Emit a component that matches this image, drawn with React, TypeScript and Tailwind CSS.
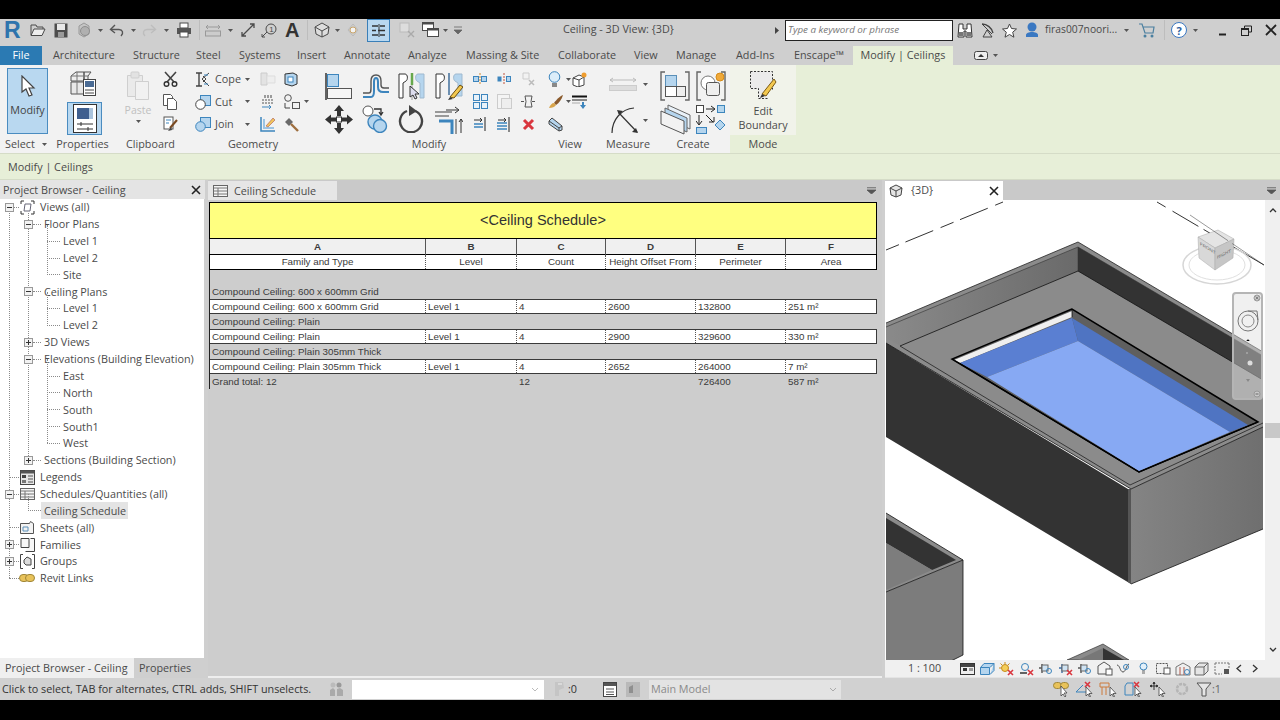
import type { ReactNode } from "react";

const S = ({ w, h, children }: { w: number; h: number; children?: ReactNode }) => (
  <svg width={w} height={h} viewBox={`0 0 ${w} ${h}`} fill="none" className="block shrink-0">
    {children}
  </svg>
);

const Dd = () => (
  <S w={5} h={3}>
    <path d="M0 0h5L2.5 3z" fill="#555" />
  </S>
);

const BLUE = "#3d85bd";
const PALE = "#b5d5ee";
const INK = "#4a4a4a";

// quick access toolbar
const QFolder = () => (
  <S w={16} h={14}>
    <path d="M1 12V2h5l1 2h6v2" stroke={INK} />
    <path d="M1 12.5 4 6h11l-3 6.5z" fill="#eee" stroke={INK} />
  </S>
);
const QSave = () => (
  <S w={14} h={15}>
    <rect x="0.5" y="0.5" width="13" height="14" fill="#4d4d4d" />
    <rect x="3" y="1" width="8" height="6" fill="#e8e8e8" />
    <rect x="4" y="9" width="6" height="5" fill="#9a9a9a" />
  </S>
);
const QSync = () => (
  <S w={16} h={16}>
    <path d="M3 4 8 1l5 3v8l-5 3-5-3z" fill="#c4c4c4" stroke="#999" />
    <circle cx="9" cy="9" r="4.5" fill="#b0b0b0" stroke="#8f8f8f" />
  </S>
);
const QUndo = ({ off }: { off?: boolean }) => (
  <S w={16} h={15}>
    <g transform={off ? "matrix(-1 0 0 1 16 0)" : undefined} stroke={off ? "#bdbdbd" : "#555"} strokeWidth="1.4">
      <path d="M6 2 1.5 6.5 6 10" />
      <path d="M2 6.5h8c3.5 0 5 3.5 2 6.5" />
    </g>
  </S>
);
const QPrint = () => (
  <S w={16} h={16}>
    <rect x="4" y="1" width="8" height="5" fill="#fff" stroke={INK} />
    <rect x="1" y="6" width="14" height="6" fill="#555" />
    <rect x="4" y="10" width="8" height="5" fill="#fff" stroke={INK} />
  </S>
);
const QMeasure = () => (
  <S w={16} h={14}>
    <path d="M1 4h14M3 2 1 4l2 2M13 2l2 2-2 2" stroke="#999" />
    <rect x="0.5" y="8" width="15" height="5" fill="#ccc" stroke="#999" />
  </S>
);
const QDiag = () => (
  <S w={16} h={16}>
    <path d="M2 14 14 2M10 2h4v4M2 10v4h4" stroke={INK} strokeWidth="1.3" />
  </S>
);
const QTag = () => (
  <S w={16} h={15}>
    <circle cx="10" cy="6" r="5" stroke={INK} />
    <text x="8.3" y="9" fontSize="8" fill={INK} fontFamily="Liberation Sans">1</text>
    <path d="M1 14 6 9M1 11v3h3" stroke={INK} />
  </S>
);
const QHome = () => (
  <S w={16} h={16}>
    <path d="M8 1 1 5l1 7 6 3 6-3 1-7z" fill="#ddd" stroke={INK} />
    <path d="M1 5l7 4 7-4M8 9v6" stroke={INK} />
  </S>
);
const QRing = () => (
  <S w={12} h={14}>
    <path d="M6 1 11 7 6 13 1 7z" stroke="#bbb" />
    <circle cx="6" cy="7" r="3" fill="#f3f3f3" stroke="#c9a56a" />
  </S>
);
const QThin = () => (
  <div className="w-[23px] h-[23px] bg-[#b9d8f0] border border-[#3a7fb8] flex items-center justify-center">
    <S w={15} h={15}>
      <path d="M1 3h6M9 3h5M1 7.500h4M7 7.500h7M1 12h6M9 12h5" stroke="#333" strokeWidth="1.6" />
      <path d="M8 1v13" stroke="#333" />
    </S>
  </div>
);
const QWin1 = () => (
  <S w={16} h={16}>
    <rect x="1" y="1" width="9" height="9" fill="#ddd" stroke="#bbb" />
    <path d="M9 9l6 6M15 9l-6 6" stroke="#aaa" strokeWidth="1.4" />
  </S>
);
const QWin2 = () => (
  <S w={17} h={16}>
    <rect x="0.500" y="0.500" width="11" height="8" fill="#fff" stroke={INK} />
    <rect x="0.500" y="0.500" width="11" height="2" fill={INK} />
    <rect x="5.500" y="6.500" width="11" height="8" fill="#fff" stroke={INK} />
    <rect x="5.500" y="6.500" width="11" height="2" fill={INK} />
  </S>
);
const QCustom = () => (
  <S w={8} h={9}>
    <path d="M0 1h8M0 4h8L4 8z" fill="#666" stroke="#666" strokeWidth="0.8" />
  </S>
);

// ribbon: select / properties / clipboard
const Cursor = ({ size = 22 }: { size?: number }) => (
  <svg width={size} height={size} viewBox="0 0 22 22" className="block shrink-0">
    <path d="M5 1v16l4-3 3 7 3-1-3-7h5z" fill="#fff" stroke="#444" strokeWidth="1.2" />
  </svg>
);
const BigProps = () => (
  <S w={28} h={27}>
    <path d="M1 6 6 2h8v9H1zM14 2h7l-3 4v6h-4z" fill="#eee" stroke="#555" />
    <path d="M1 12h13v12H1z" fill="#e8e8e8" stroke="#555" />
    <path d="M7 2v22M1 6h17" stroke="#777" />
    <rect x="13.500" y="9.500" width="12" height="16" fill="#fff" stroke="#444" />
    <rect x="15" y="11" width="9" height="6" fill="#4a6b94" />
    <path d="M15 20h9M15 23h9" stroke="#444" />
  </S>
);
const BigPropsActive = () => (
  <S w={24} h={29}>
    <rect x="0.500" y="0.500" width="23" height="28" fill="#fff" stroke="#333" />
    <rect x="4" y="4" width="12" height="11" fill="#3f5f8f" />
    <rect x="16" y="4" width="4" height="11" fill="#a9c3dd" />
    <path d="M4 20h16M4 25h16M8 18v4M15 23v4" stroke="#333" />
  </S>
);
const Paste = () => (
  <S w={24} h={30}>
    <path d="M1.500 4.500h15v21h-15z" fill="#eaeaea" stroke="#cfcfcf" />
    <rect x="5" y="1" width="8" height="6" rx="1" fill="#e2e2e2" stroke="#cfcfcf" />
    <path d="M9.500 10.500h13v18h-13z" fill="#f1f1f1" stroke="#cfcfcf" />
  </S>
);
const Scissors = () => (
  <S w={15} h={16}>
    <path d="M2 1l9 10M13 1 4 11" stroke="#444" strokeWidth="1.6" />
    <circle cx="3.500" cy="13" r="2.300" stroke="#333" strokeWidth="1.4" />
    <circle cx="11.500" cy="13" r="2.300" stroke="#333" strokeWidth="1.4" />
  </S>
);
const Copy = () => (
  <S w={14} h={16}>
    <path d="M.5.500h7l2 2v9H.5z" fill="#fff" stroke="#555" />
    <path d="M4.500 4.500h6l3 3v8h-9z" fill="#fff" stroke="#555" />
  </S>
);
const Match = () => (
  <S w={16} h={16}>
    <rect x="1" y="1" width="9" height="12" fill="#fff" stroke="#555" />
    <path d="M3 4h5M3 7h3" stroke="#3d85bd" />
    <path d="M14 4 7 12" stroke="#7a4a22" strokeWidth="2" />
    <path d="M8 11 5 15l4-1z" fill="#444" />
  </S>
);

// geometry
const Cope = () => (
  <S w={16} h={15}>
    <path d="M1 1h6M1 14h6M4 1v13" stroke="#444" strokeWidth="1.4" />
    <path d="M7 7 14 1M7 7l7 7M8 4l3 3-3 3" stroke="#444" />
    <path d="M9 3h4M9 12h4" stroke="#3d85bd" />
  </S>
);
const Cut = () => (
  <S w={16} h={16}>
    <rect x="5.500" y="1.500" width="10" height="10" fill={PALE} stroke={BLUE} />
    <circle cx="5.500" cy="10.500" r="4.800" fill="#fff" stroke="#444" />
  </S>
);
const Join = () => (
  <S w={16} h={16}>
    <rect x="5.500" y="1.500" width="10" height="10" fill={PALE} stroke={BLUE} />
    <circle cx="5.500" cy="10.500" r="4.800" fill={PALE} stroke={BLUE} />
  </S>
);
const WallOff = () => (
  <S w={16} h={14}>
    <path d="M1 1h6v12H1z" fill="#e3e3e3" stroke="#ccc" />
    <path d="M7 4h8v7H7z" fill="#eee" stroke="#ddd" />
  </S>
);
const ShieldBlue = () => (
  <S w={14} h={15}>
    <path d="M1 2 9 1l4 2v9l-5 2-7-2z" fill={PALE} stroke="#333" />
    <rect x="4" y="5" width="5" height="5" fill="#fff" stroke={BLUE} />
  </S>
);
const Split = () => (
  <S w={16} h={16}>
    <path d="M2 6h12M2 9h12" stroke="#555" strokeDasharray="2 1" />
    <path d="M5 1v3M8 1v3M11 1v3" stroke="#444" />
    <path d="M2 13h9M9 11l2 2-2 2" stroke={BLUE} />
  </S>
);
const Offset = () => (
  <S w={16} h={16}>
    <circle cx="4" cy="4" r="3.300" stroke="#555" />
    <rect x="8.500" y="8.500" width="7" height="6" stroke="#555" />
    <path d="M1 9v5h5" stroke="#444" />
  </S>
);
const Wall = () => (
  <S w={16} h={16}>
    <path d="M1 1v14h14" stroke={BLUE} strokeWidth="1.500" />
    <path d="M4 3v9h10" stroke="#9cc4e4" strokeWidth="2" />
    <path d="M6 10 13 2l2 2-7 7z" fill="#f1c65b" stroke="#a55" strokeWidth="0.600" />
  </S>
);
const Hammer = () => (
  <S w={15} h={15}>
    <path d="M1 5 5 1l4 4-4 4z" fill="#6a6a6a" />
    <path d="M7 7l7 7" stroke="#9e6f3f" strokeWidth="2.400" />
  </S>
);

// modify
const Align = () => (
  <S w={28} h={27}>
    <path d="M1 0v27" stroke="#333" strokeWidth="1.500" />
    <rect x="2.500" y="1.500" width="11" height="12" fill={PALE} stroke={BLUE} />
    <rect x="2.500" y="15.500" width="24" height="10" fill="#f6f6f6" stroke="#555" />
  </S>
);
const OffsetBig = () => (
  <S w={28} h={26}>
    <path d="M1 20h6c2 0 2-2 2-6V8c0-4 2-6 5-6s5 2 5 6v4c0 2 1 3 3 3h5" stroke="#555" strokeWidth="1.400" />
    <path d="M1 24h8c2 0 3-2 3-6v-9c0-3 1-4 2-4s2 1 2 4v5c0 3 2 5 5 5h6" stroke={BLUE} strokeWidth="2" />
  </S>
);
const Mirror = ({ cursor }: { cursor?: boolean }) => (
  <S w={27} h={27}>
    <path d="M1 1h6c3 0 3 6 1 7l-3 2v15H1z" fill="#fff" stroke="#333" />
    <path d="M14 0v12" stroke="#67a84c" strokeWidth="2.500" />
    <path d="M14 12v15" stroke="#999" />
    <path d="M26 1h-6c-3 0-3 6-1 7l3 2v15h4z" fill={PALE} stroke="#9fb9cf" />
    {cursor ? <path d="M12 13v11l3-2 2 4 2-1-2-4h4z" fill="#dde" stroke="#333" /> : null}
  </S>
);
const MirrorDraw = () => (
  <S w={28} h={27}>
    <path d="M1 1h6c3 0 3 6 1 7l-3 2v15H1z" fill="#fff" stroke="#333" />
    <path d="M14 0v22" stroke="#6d8fb0" strokeWidth="2" />
    <path d="M27 1h-6c-3 0-3 6-1 7l3 2v7l-5 6h9z" fill={PALE} stroke="#9fb9cf" />
    <path d="M25 12 15 24l4 1 9-11z" fill="#f3c84f" stroke="#6a4d12" />
    <path d="M15 24l-2 3 5-1z" fill="#333" />
  </S>
);
const Move = () => (
  <S w={28} h={29}>
    <path d="M14 0l5 6h-3v5h-4V6H9zM14 29l-5-6h3v-5h4v5h3zM0 14.500l6-5v3h5v4H6v3zM28 14.500l-6 5v-3h-5v-4h5v-3z" fill="#333" />
    <rect x="11.500" y="12" width="5" height="5" fill="#fff" stroke="#333" />
  </S>
);
const CopyBig = () => (
  <S w={26} h={28}>
    <circle cx="6" cy="6" r="5" fill="#fff" stroke="#555" />
    <path d="M12 4h7v5M17 7l2 3 2-3" stroke="#333" strokeWidth="1.300" />
    <circle cx="13" cy="17" r="7" fill={PALE} stroke={BLUE} strokeWidth="1.400" />
    <circle cx="18" cy="21" r="6.500" fill={PALE} stroke={BLUE} strokeWidth="1.400" />
  </S>
);
const Rotate = () => (
  <S w={26} h={28}>
    <path d="M9 6a11 11 0 1 0 8 0" stroke="#444" strokeWidth="2.400" />
    <path d="M11 0l8 6-8 5z" fill="#444" />
  </S>
);
const Trim = () => (
  <S w={28} h={29}>
    <path d="M0 7h17M0 11h14" stroke="#999" strokeWidth="2" />
    <path d="M11 5h12M20 2l4 3-4 3" stroke="#333" />
    <path d="M4 16h13v13" stroke={BLUE} strokeWidth="3" />
    <path d="M21 14v15" stroke="#999" strokeWidth="2" />
    <path d="M26 28V14M24 17l2-3 2 3" stroke="#333" />
  </S>
);
const Sm1 = () => (
  <S w={14} h={12}>
    <rect x="0.500" y="3.500" width="5" height="5" fill={PALE} stroke={BLUE} />
    <rect x="8.500" y="3.500" width="5" height="5" fill={PALE} stroke={BLUE} />
    <path d="M7 0v12" stroke="#d28a2c" strokeDasharray="2 1" />
  </S>
);
const Sm2 = () => (
  <S w={14} h={12}>
    <rect x="0.500" y="3.500" width="4" height="5" fill="#3d85bd" />
    <rect x="9.500" y="3.500" width="4" height="5" fill={PALE} stroke={BLUE} />
    <path d="M7 0v12" stroke="#c0533a" strokeDasharray="2 1" />
  </S>
);
const Sm3 = () => (
  <S w={14} h={14}>
    <path d="M2 1h6v6H2z" stroke="#ccc" />
    <path d="M8 8l5 5M13 8l-5 5" stroke="#bbb" strokeWidth="1.500" />
  </S>
);
const Sm4 = () => (
  <S w={15} h={15}>
    <rect x="0.500" y="0.500" width="6" height="6" fill="#e8f2fa" stroke={BLUE} />
    <rect x="8.500" y="0.500" width="6" height="6" fill="#e8f2fa" stroke={BLUE} />
    <rect x="0.500" y="8.500" width="6" height="6" fill="#e8f2fa" stroke={BLUE} />
    <rect x="8.500" y="8.500" width="6" height="6" fill="#e8f2fa" stroke={BLUE} />
  </S>
);
const Sm5 = () => (
  <S w={15} h={15}>
    <rect x="0.500" y="0.500" width="12" height="14" fill="#f4f4f4" stroke="#ccc" />
    <rect x="4.500" y="4.500" width="10" height="10" fill="#eee" stroke="#ccc" />
  </S>
);
const Sm6 = () => (
  <S w={14} h={13}>
    <path d="M0 6.500h3M11 6.500h3M4 1h7l-1 5.500 1 5.500H4l1-5.500z" stroke="#555" />
  </S>
);
const Sm7 = () => (
  <S w={15} h={14}>
    <path d="M1 3h8M7 1l2 2-2 2" stroke="#333" />
    <path d="M1 7h9M1 10h9" stroke={BLUE} strokeWidth="1.500" />
    <path d="M12 0v14" stroke="#666" strokeWidth="1.500" />
  </S>
);
const Sm8 = () => (
  <S w={16} h={15}>
    <path d="M2 3h8M8 1l2 2-2 2" stroke="#333" />
    <path d="M1 6h10M1 9h10M1 12h10" stroke={BLUE} strokeWidth="1.500" />
    <path d="M13 0v15" stroke="#666" strokeWidth="1.500" />
  </S>
);
const RedX = () => (
  <S w={13} h={13}>
    <path d="M2 2l9 9M11 2l-9 9" stroke="#d9363e" strokeWidth="3" />
  </S>
);

// view
const Bulb = () => (
  <S w={13} h={17}>
    <circle cx="6.500" cy="6" r="5.300" fill="#dcedf9" stroke={BLUE} />
    <rect x="4" y="12" width="5" height="4" fill="#888" />
  </S>
);
const SunCube = () => (
  <S w={16} h={15}>
    <path d="M1 6l6-3 5 2v8l-6 2-5-2z" fill="#fff" stroke="#444" />
    <path d="M1 6l6 2 5-3M7 8v7" stroke="#444" />
    <circle cx="12" cy="3" r="2.500" fill="#ef9d2f" />
  </S>
);
const Brush = () => (
  <S w={16} h={15}>
    <path d="M15 1C12 2 8 6 6 9l2 2c3-2 6-6 7-10z" fill="#8a5a2c" />
    <path d="M6 9c-2 0-4 2-5 5 3 0 6-1 7-3z" fill="#d8a44a" />
  </S>
);
const Lines = () => (
  <S w={15} h={14}>
    <path d="M0 1.500h15" stroke="#111" strokeWidth="2" />
    <path d="M0 5h15" stroke="#666" strokeWidth="1.500" />
    <path d="M0 8h8" stroke="#aaa" />
    <path d="M11 7v4" stroke={BLUE} strokeWidth="2" />
    <path d="M8 10h6l-3 4z" fill={BLUE} />
  </S>
);
const CubeBlue = () => (
  <S w={15} h={15}>
    <path d="M1 4 4 1l10 8v4l-3 1L1 7z" fill={PALE} stroke="#444" />
    <path d="M1 4l10 7v3M11 11l3-2" stroke="#444" />
  </S>
);

// measure, create, mode
const Dim = () => (
  <S w={28} h={14}>
    <path d="M1 3h26M4 1 1 3l3 2M24 1l3 2-3 2" stroke="#bbb" />
    <rect x="0.500" y="8.500" width="27" height="5" fill="#ddd" stroke="#ccc" />
  </S>
);
const Radial = () => (
  <S w={30} h={28}>
    <path d="M3 27C3 14 12 3 25 2" stroke="#333" strokeWidth="1.200" />
    <path d="M10 7l18 19" stroke="#333" strokeWidth="1.200" />
    <path d="M8 4l6 1-4 4zM29 27l-6-1 4-4z" fill="#333" />
  </S>
);
const Parts = () => (
  <S w={30} h={30}>
    <path d="M5 1H1v28h4M25 1h4v28h-4" stroke="#666" strokeWidth="1.400" />
    <rect x="5.500" y="4.500" width="11" height="11" fill={PALE} stroke="#5a8fb8" />
    <rect x="5.500" y="15.500" width="11" height="10" fill="#fff" stroke="#555" />
    <rect x="16.500" y="15.500" width="9" height="10" fill="#eee" stroke="#555" />
  </S>
);
const AssemblyNew = () => (
  <S w={30} h={30}>
    <path d="M5 1H1v28h4M25 1h4v28h-4" stroke="#666" strokeWidth="1.400" />
    <circle cx="12" cy="12" r="7" fill="#fff" stroke="#777" />
    <rect x="10.500" y="11.500" width="13" height="13" rx="2" fill="#eee" stroke="#555" />
    <circle cx="24" cy="6" r="4" fill="#f0a93a" stroke="#d68c1a" />
  </S>
);
const Sheets = () => (
  <S w={31} h={31}>
    <path d="M8 1 30 11v14L8 15z" fill="#e9f1f8" stroke="#666" strokeLinejoin="round" />
    <path d="M5 4 27 14v14L5 18z" fill="#b5d5ee" stroke="#666" strokeLinejoin="round" />
    <path d="M1 7 24 17v13L1 20z" fill="#f2f2f2" stroke="#555" strokeLinejoin="round" />
  </S>
);
const Flow = () => (
  <S w={30} h={30}>
    <rect x="0.500" y="1.500" width="7" height="7" fill="#fff" stroke="#444" />
    <path d="M10 5h8M15 2l4 3-4 3" stroke="#222" />
    <rect x="21.500" y="1.500" width="7" height="7" fill={PALE} stroke={BLUE} />
    <path d="M3 11v9M0 17l3 4 3-4" stroke="#222" />
    <path d="M10 11l7 7M13 18h5v-5" stroke="#222" />
    <rect x="0.500" y="23.500" width="10" height="6" fill={PALE} stroke={BLUE} />
    <path d="M24 16l5 5-5 5-5-5z" fill={PALE} stroke={BLUE} />
  </S>
);
const EditBoundary = () => (
  <S w={28} h={30}>
    <path d="M1.500 1.500h22v18h-5v9h-9v-9h-8z" fill="#ebebeb" />
    <path d="M1.500 1.500h22v18M1.500 1.500v17h8v10h9" stroke="#333" strokeDasharray="2 1.500" />
    <path d="M25 9 13 24l4 2 10-14z" fill="#f3c84f" stroke="#7a5a14" />
    <path d="M13 24l-2 4 5-2z" fill="#333" />
  </S>
);

const Panel = ({ label, w, children }: { label: ReactNode; w: string; children: ReactNode }) => (
  <div className={`${w} flex flex-col shrink-0`}>
    <div className="h-[71px] flex">{children}</div>
    <div className="h-[17px] flex items-center justify-center text-[10.800px] text-[#4c4c4c] whitespace-nowrap">{label}</div>
  </div>
);

const Ribbon = () => (
  <div className="h-[88px] bg-[#e7efd8] flex">
    <div className="flex bg-[#f2f2f2] w-[730px]">
      <Panel w="w-[52px]" label={<span className="flex items-center gap-[7px]">Select <Dd /></span>}>
        <div className="ml-[7px] mt-[3px] w-[41px] h-[66px] bg-[#b9d8f0] border border-[#4a8cc0] flex flex-col items-center">
          <div className="mt-[6px]">
            <Cursor />
          </div>
          <span className="mt-[5px] text-[10.800px] text-[#444]">Modify</span>
        </div>
      </Panel>
      <Panel w="w-[61px]" label="Properties">
        <div className="flex flex-col items-center w-full pt-[5px]">
          <div className="ml-[2px]">
            <BigProps />
          </div>
          <div className="mt-[5px] ml-[4px] w-[35px] h-[33px] bg-[#b9d8f0] border border-[#4a8cc0] flex items-center justify-center">
            <BigPropsActive />
          </div>
        </div>
      </Panel>
      <Panel w="w-[75px]" label="Clipboard">
        <div className="w-[50px] flex flex-col items-center pt-[6px]">
          <Paste />
          <span className="mt-[2px] text-[10.500px] text-[#c0c0c0] leading-[14px]">Paste</span>
          <div className="mt-[3px]">
            <Dd />
          </div>
        </div>
        <div className="pt-[3px] grid grid-rows-[repeat(3,22.500px)] items-center">
          <Scissors />
          <Copy />
          <Match />
        </div>
      </Panel>
      <Panel w="w-[130px]" label="Geometry">
        <div className="pt-[3px] pl-[7px] grid grid-rows-[repeat(3,22.500px)] items-center w-[72px] text-[10.800px] text-[#4c4c4c]">
          <span className="flex items-center">
            <Cope />
            <span className="ml-[4px] w-[30px]">Cope</span>
            <Dd />
          </span>
          <span className="flex items-center">
            <Cut />
            <span className="ml-[4px] w-[30px]">Cut</span>
            <Dd />
          </span>
          <span className="flex items-center">
            <Join />
            <span className="ml-[4px] w-[30px]">Join</span>
            <Dd />
          </span>
        </div>
        <div className="pt-[3px] grid grid-cols-[24px_30px] grid-rows-[repeat(3,22.500px)] items-center">
          <WallOff />
          <ShieldBlue />
          <Split />
          <span className="flex items-center gap-[4px]">
            <Offset />
            <Dd />
          </span>
          <Wall />
          <Hammer />
        </div>
      </Panel>
      <Panel w="w-[222px]" label="Modify">
        <div className="ml-[7px] pt-[6px] grid grid-cols-[repeat(4,36.500px)] grid-rows-[30px_30px] gap-y-[3px] items-center">
          <Align />
          <OffsetBig />
          <Mirror cursor />
          <MirrorDraw />
          <Move />
          <CopyBig />
          <Rotate />
          <Trim />
        </div>
        <div className="-ml-[3px] pt-[3px] grid grid-cols-[repeat(3,24px)] grid-rows-[repeat(3,22.500px)] items-center justify-items-center">
          <Sm1 />
          <Sm2 />
          <Sm3 />
          <Sm4 />
          <Sm5 />
          <Sm6 />
          <Sm7 />
          <Sm8 />
          <RedX />
        </div>
      </Panel>
      <Panel w="w-[60px]" label="View">
        <div className="pl-[8px] pt-[3px] grid grid-cols-[24px_20px] grid-rows-[repeat(3,22.500px)] items-center">
          <span className="flex items-center gap-[5px]">
            <Bulb />
            <Dd />
          </span>
          <SunCube />
          <span className="flex items-center gap-[2px]">
            <Brush />
            <Dd />
          </span>
          <Lines />
          <CubeBlue />
        </div>
      </Panel>
      <Panel w="w-[56px]" label="Measure">
        <div className="pl-[9px] pt-[12px] flex flex-col">
          <div className="flex items-center gap-[6px]">
            <Dim />
            <Dd />
          </div>
          <div className="flex items-center gap-[4px] mt-[15px]">
            <Radial />
            <Dd />
          </div>
        </div>
      </Panel>
      <Panel w="w-[74px]" label="Create">
        <div className="pl-[4px] pt-[6px] grid grid-cols-[36px_31px] grid-rows-[30px_30px] gap-y-[3px] items-center">
          <Parts />
          <AssemblyNew />
          <Sheets />
          <Flow />
        </div>
      </Panel>
    </div>
    <Panel w="w-[66px]" label="Mode">
      <div className="w-full h-[70px] bg-[#f1f3ea] flex flex-col items-center pt-[5px] text-[10.800px] leading-[14px] text-[#4c4c4c]">
        <EditBoundary />
        <span className="mt-[4px]">Edit</span>
        <span>Boundary</span>
      </div>
    </Panel>
  </div>
);

// project browser
const TViews = () => (
  <S w={15} h={15}>
    <path d="M1 4V1h3M11 1h3v3M14 11v3h-3M4 14H1v-3" stroke="#333" />
    <path d="M5 4h6l-1 7H4z" stroke="#667" />
  </S>
);
const TLegends = () => (
  <S w={15} h={15}>
    <rect x="0.500" y="0.500" width="14" height="14" fill="#e6e6e6" stroke="#444" />
    <rect x="0.500" y="0.500" width="14" height="3" fill="#555" />
    <rect x="2" y="5" width="4" height="3" fill="#444" />
    <rect x="2" y="10" width="4" height="3" fill="#777" />
    <path d="M8 6h5M8 9h5M8 12h5" stroke="#555" />
  </S>
);
const TSchedule = () => (
  <S w={15} h={12}>
    <rect x="0.500" y="0.500" width="14" height="11" fill="#f5f5f5" stroke="#666" />
    <path d="M1 3h13M1 6h13M1 9h13M5 3v8" stroke="#777" />
  </S>
);
const TSheets = () => (
  <S w={15} h={15}>
    <path d="M.5 3.500h9l1-2 3 2v10H.5z" fill="#f3f3f3" stroke="#555" />
    <path d="M3 7h5v4H3z" stroke="#5a8fb8" />
  </S>
);
const TFamilies = () => (
  <S w={15} h={15}>
    <path d="M1 10.500V1.500h8v9zM10.500 1.500h4v13h-9" stroke="#444" fill="#f7f7f7" />
  </S>
);
const TGroups = () => (
  <S w={15} h={15}>
    <path d="M3 .5H.5v14H3M12 .5h2.500v14H12" stroke="#444" />
    <path d="M4 6l3-3 4 2v6H6L4 9z" fill="#ddd" stroke="#444" />
  </S>
);
const TLinks = () => (
  <S w={16} h={8}>
    <rect x="0.500" y="0.500" width="9" height="7" rx="3.500" fill="#e8c25a" stroke="#a08638" />
    <rect x="6.500" y="0.500" width="9" height="7" rx="3.500" fill="#e8c25a" stroke="#a08638" />
  </S>
);

const Box = ({ plus, className }: { plus?: boolean; className: string }) => (
  <svg width="9" height="9" viewBox="0 0 9 9" className={`block shrink-0 relative ${className}`}>
    <rect x="0.500" y="0.500" width="8" height="8" fill="#f2f2f2" stroke="#999" />
    <path d={plus ? "M2 4.500h5M4.500 2v5" : "M2 4.500h5"} stroke="#333" />
  </svg>
);
const Dots = ({ w }: { w: string }) => <span className={`${w} border-t border-dotted border-[#8a8a8a] shrink-0`} />;

const Row0 = ({ box, icon, label, dots }: { box?: "plus" | "minus"; icon: ReactNode; label: string; dots: string }) => (
  <div className="h-[16.870px] flex items-center whitespace-nowrap">
    {box ? <Box plus={box === "plus"} className="ml-[5px]" /> : <span className="w-[9px]" />}
    <Dots w={dots} />
    <span className="w-[16px] flex justify-center">{icon}</span>
    <span className="ml-[5px]">{label}</span>
  </div>
);
const Row1 = ({ box, label, selected }: { box?: "plus" | "minus"; label: string; selected?: boolean }) => (
  <div className="h-[16.870px] flex items-center whitespace-nowrap">
    {box ? (
      <>
        <Box plus={box === "plus"} className="ml-[24px]" />
        <Dots w="w-[8px]" />
      </>
    ) : (
      <>
        <span className="w-[28px]" />
        <Dots w="w-[13px]" />
      </>
    )}
    <span className={selected ? "bg-[#e4e4e4] pl-[3px] w-[87px] h-full flex items-center" : "pl-[3px]"}>{label}</span>
  </div>
);
const Row2 = ({ label }: { label: string }) => (
  <div className="h-[16.870px] flex items-center whitespace-nowrap">
    <span className="w-[47px]" />
    <Dots w="w-[13px]" />
    <span className="pl-[3px]">{label}</span>
  </div>
);

const Guide = ({ className }: { className: string }) => (
  <div className={`absolute border-l border-dotted border-[#8a8a8a] ${className}`} />
);

const ProjectBrowser = () => (
  <div className="w-[205px] shrink-0 flex flex-col">
    <div className="h-[19px] pt-[1px] bg-[#e4e4e4] flex items-center justify-between pl-[3px] pr-[4px] text-[10.800px] text-[#4a4a4a]">
      <span>Project Browser - Ceiling</span>
      <svg width="10" height="10" viewBox="0 0 10 10" className="block">
        <path d="M1 1l8 8M9 1 1 9" stroke="#222" strokeWidth="1.600" />
      </svg>
    </div>
    <div className="relative h-[459px] bg-white mr-[1px] text-[10.800px] text-[#4a4a4a] overflow-hidden">
      <Guide className="left-[9px] top-[9px] h-[370px]" />
      <Guide className="left-[28px] top-[14px] h-[247px]" />
      <Guide className="left-[28px] top-[295px] h-[17px]" />
      <Guide className="left-[47px] top-[26px] h-[50px]" />
      <Guide className="left-[47px] top-[93px] h-[34px]" />
      <Guide className="left-[47px] top-[160px] h-[84px]" />
      <Row0 box="minus" icon={<TViews />} label="Views (all)" dots="w-[5px]" />
      <Row1 box="minus" label="Floor Plans" />
      <Row2 label="Level 1" />
      <Row2 label="Level 2" />
      <Row2 label="Site" />
      <Row1 box="minus" label="Ceiling Plans" />
      <Row2 label="Level 1" />
      <Row2 label="Level 2" />
      <Row1 box="plus" label="3D Views" />
      <Row1 box="minus" label="Elevations (Building Elevation)" />
      <Row2 label="East" />
      <Row2 label="North" />
      <Row2 label="South" />
      <Row2 label="South1" />
      <Row2 label="West" />
      <Row1 box="plus" label="Sections (Building Section)" />
      <Row0 icon={<TLegends />} label="Legends" dots="w-[10px]" />
      <Row0 box="minus" icon={<TSchedule />} label="Schedules/Quantities (all)" dots="w-[5px]" />
      <Row1 label="Ceiling Schedule" selected />
      <Row0 icon={<TSheets />} label="Sheets (all)" dots="w-[10px]" />
      <Row0 box="plus" icon={<TFamilies />} label="Families" dots="w-[5px]" />
      <Row0 box="plus" icon={<TGroups />} label="Groups" dots="w-[5px]" />
      <Row0 icon={<TLinks />} label="Revit Links" dots="w-[10px]" />
    </div>
    <div className="h-[20px] flex text-[10.800px] text-[#4a4a4a] whitespace-nowrap">
      <div className="w-[134px] bg-[#efefef] pl-[5px] flex items-center">Project Browser - Ceiling</div>
      <div className="pl-[5px] flex items-center">Properties</div>
    </div>
  </div>
);

// schedule table
const Kebab = () => (
  <svg width="9" height="7" viewBox="0 0 9 7" className="block">
    <path d="M0 .75h9M0 3h9L4.500 7z" fill="#555" stroke="#555" strokeWidth="0.800" />
  </svg>
);

const colGrid = "grid grid-cols-[215px_91px_89px_90px_90px_91px]";
const dataCell = "pl-[2px] border-l border-dotted border-[#555] whitespace-nowrap overflow-hidden";

const DataRow = ({ cells }: { cells: string[] }) => (
  <div className={`${colGrid} h-[15px] bg-white border-y border-[#3a3a3a] border-r leading-[13px]`}>
    {cells.map((c, i) => (
      <div key={i} className={i === 0 ? "pl-[2px]" : dataCell}>
        {c}
      </div>
    ))}
  </div>
);

const GroupRow = ({ label }: { label: string }) => <div className="h-[15px] pl-[2px] leading-[15px]">{label}</div>;

const Schedule = () => (
  <div className="flex flex-col w-[674px] shrink-0">
    <div className="h-[20px] pt-[1px] flex items-stretch justify-between bg-[#c9c9c9] pr-[6px] text-[10.800px] text-[#4a4a4a]">
      <div className="w-[129px] bg-[#e6e6e6] flex items-center pl-[5px] pt-[1px]">
        <TSchedule />
        <span className="ml-[6px]">Ceiling Schedule</span>
      </div>
      <div className="flex items-center">
        <Kebab />
      </div>
    </div>
    <div className="h-[478px] bg-[#cdcdcd] border-b-2 border-[#eeeeee] pt-[2px] font-['Liberation_Sans',Arial,sans-serif] text-[9.800px] text-[#3a3a3a]">
      <div className="w-[668px] ml-[1px]">
        <div className="h-[37px] bg-[#ffff80] border border-black flex items-center justify-center text-[14.500px] text-[#333]">
          {"<Ceiling Schedule>"}
        </div>
        <div className={`${colGrid} h-[15px] bg-[#f0f0f0] border-x border-[#222] text-center font-bold leading-[16px]`}>
          {["A", "B", "C", "D", "E", "F"].map((c, i) => (
            <div key={c} className={i === 0 ? "" : "border-l border-[#555]"}>
              {c}
            </div>
          ))}
        </div>
        <div className={`${colGrid} h-[16px] bg-white border border-black text-center leading-[14px]`}>
          {["Family and Type", "Level", "Count", "Height Offset From", "Perimeter", "Area"].map((c, i) => (
            <div key={c} className={i === 0 ? "" : "border-l border-dotted border-[#555] whitespace-nowrap"}>
              {c}
            </div>
          ))}
        </div>
        <div className="border-l border-[#222]">
          <div className="h-[14px]" />
          <GroupRow label="Compound Ceiling: 600 x 600mm Grid" />
          <DataRow cells={["Compound Ceiling: 600 x 600mm Grid", "Level 1", "4", "2600", "132800", "251 m²"]} />
          <GroupRow label="Compound Ceiling: Plain" />
          <DataRow cells={["Compound Ceiling: Plain", "Level 1", "4", "2900", "329600", "330 m²"]} />
          <GroupRow label="Compound Ceiling: Plain 305mm Thick" />
          <DataRow cells={["Compound Ceiling: Plain 305mm Thick", "Level 1", "4", "2652", "264000", "7 m²"]} />
          <div className={`${colGrid} h-[15px] leading-[15px]`}>
            <div className="pl-[2px]">Grand total: 12</div>
            <div />
            <div className="pl-[3px]">12</div>
            <div />
            <div className="pl-[3px]">726400</div>
            <div className="pl-[3px]">587 m²</div>
          </div>
        </div>
      </div>
    </div>
  </div>
);

// 3D canvas drawn in screen coordinates
const Model = () => (
  <svg width="380" height="460" viewBox="885 200 380 460" className="block shrink-0 bg-white">
    <defs>
      <linearGradient id="wl" x1="886" y1="0" x2="1078" y2="0" gradientUnits="userSpaceOnUse">
        <stop offset="0" stopColor="#8a8a8a" />
        <stop offset="1" stopColor="#6a6a6a" />
      </linearGradient>
      <linearGradient id="wr" x1="1131" y1="0" x2="1263" y2="0" gradientUnits="userSpaceOnUse">
        <stop offset="0" stopColor="#848484" />
        <stop offset="1" stopColor="#6f6f6f" />
      </linearGradient>
    </defs>
    <path d="M886 250 1003 202" stroke="#333" strokeDasharray="14 7 30 8" />
    <path d="M1157 202 1264 265" stroke="#333" strokeDasharray="10 8 30 6 70 0" />
    {/* big box */}
    <polygon points="886,323 1078,242 1263,352 1263,427 1131,489 886,343" fill="#8b8b8b" />
    <polygon points="886,327 1078,247 1078,271 900,346 886,338" fill="url(#wl)" />
    <polygon points="1078,247 1263,356 1263,380 1078,271" fill="#333" />
    <path d="M886 323 1078 242 1263 352" stroke="#222" strokeWidth="0.800" fill="none" />
    <path d="M886 327 1078 247 1263 356" stroke="#333" strokeWidth="0.600" fill="none" />
    <path d="M1078 247V271" stroke="#333" strokeWidth="0.500" />
    <path d="M900 346 1078 271 1263 380" stroke="#111" strokeWidth="0.800" fill="none" />
    <path d="M900 346 1130 485 1263 423" stroke="#222" strokeWidth="0.800" fill="none" />
    {/* opening */}
    <polygon points="1072,309 952,359 1139,472 1258,422" fill="#5f5f5f" stroke="#000" strokeWidth="1.500" />
    <polygon points="1072,311 1072,317 960,363 954,360" fill="#efefef" />
    <polygon points="1072,318 960,363 987,377 1078,341" fill="#5a7fd2" />
    <polygon points="1072,318 1078,341 1230,432 1248,425" fill="#4f74c2" />
    <polygon points="1078,341 1230,432 1139,471 987,377" fill="#87a9f3" />
    <path d="M1072 309V317" stroke="#000" strokeWidth="0.700" />
    <path d="M954 360 1139 472 1258 422" stroke="#000" strokeWidth="1.200" fill="none" />
    <polygon points="886,343 1128,489 1131,489 1131,584 886,437" fill="#333" />
    <polygon points="1131,489 1263,427 1263,529 1131,584" fill="url(#wr)" />
    <polygon points="1128,489 1131,489 1131,584 1128,582" fill="#555" />
    <path d="M886 343 1131 489 1263 427" stroke="#111" strokeWidth="0.800" fill="none" />
    <path d="M1131 584 1263 529" stroke="#111" strokeWidth="0.800" />
    {/* lower left box */}
    <polygon points="886,513 963,560 886,592" fill="#8b8b8b" />
    <polygon points="886,518 956,560 932,570 886,543" fill="#333" />
    <polygon points="886,543 932,570 886,590" fill="#7d7d7d" />
    <polygon points="886,592 963,560 963,655 945,664 886,664" fill="#7c7c7c" />
    <path d="M886 513 963 560V655L945 664M886 592 963 560" stroke="#111" strokeWidth="0.800" fill="none" />
    {/* bottom box */}
    <polygon points="1067,660 1103,644 1129,660" fill="#8b8b8b" stroke="#222" strokeWidth="0.600" />
    <polygon points="1103,648 1103,660 1124,660" fill="#333" />
    <polygon points="1103,648 1103,660 1078,660" fill="#777" />
    {/* view cube */}
    <ellipse cx="1217" cy="265" rx="34" ry="19" fill="none" stroke="#d6d6d6" strokeWidth="1.500" />
    <ellipse cx="1217" cy="265" rx="28" ry="15" fill="none" stroke="#e0e0e0" />
    <polygon points="1198,237 1218,230 1234,239 1215,248" fill="#e4e4e4" stroke="#a8a8a8" strokeWidth="0.500" />
    <polygon points="1198,237 1215,248 1215,270 1199,258" fill="#d8d8d8" stroke="#a8a8a8" strokeWidth="0.500" />
    <polygon points="1215,248 1234,239 1233,258 1215,270" fill="#c6c6c6" stroke="#a8a8a8" strokeWidth="0.500" />
    <text transform="matrix(1 .6 0 1 1200 245)" fontSize="4.500" fill="#666" fontFamily="Liberation Sans">FRONT</text>
    <text transform="matrix(1 -.5 0 1 1217 259)" fontSize="4.500" fill="#666" fontFamily="Liberation Sans">RIGHT</text>
    <path d="M1190 215 1264 265" stroke="#333" strokeWidth="0.700" strokeDasharray="46 5 40 0" opacity="0.7" />
  </svg>
);

const NavBar = () => (
  <div className="absolute left-[347px] top-[92px] w-[31px] h-[108px] rounded-[4px] border-2 border-[#b5b5b5] bg-[#dddddd]/45">
    <svg width="27" height="104" viewBox="0 0 27 104" className="block">
      <circle cx="23" cy="4" r="3" fill="#c8c8c8" stroke="#999" />
      <path d="M21.500 2.500l3 3M24.500 2.500l-3 3" stroke="#666" strokeWidth="0.700" />
      <circle cx="14" cy="27" r="10" fill="none" stroke="#777" />
      <circle cx="14" cy="27" r="6" fill="none" stroke="#888" />
      <path d="M14 17h9l1 9" stroke="#777" fill="none" />
      <path d="M12 47l2-2 2 2" stroke="#aaa" />
      <circle cx="16" cy="69" r="2.500" fill="#ddd" />
      <circle cx="13" cy="59" r="1" fill="#aaa" />
      <path d="M12 85h4l-2 3z" fill="#888" />
      <circle cx="23" cy="100" r="3" fill="#c8c8c8" stroke="#999" />
      <path d="M21.500 100h3" stroke="#666" />
    </svg>
  </div>
);

// view control bar
const V1 = () => (
  <S w={15} h={12}>
    <rect x="0.500" y="0.500" width="14" height="11" fill="#eee" stroke="#333" />
    <rect x="1" y="1" width="13" height="3" fill="#444" />
    <rect x="3" y="5" width="4" height="3" fill="#333" />
    <rect x="9" y="5" width="4" height="3" fill="#999" />
  </S>
);
const V2 = () => (
  <S w={15} h={12}>
    <path d="M.5 4.500h9v7h-9zM.5 4.500 4 .5h10l-4 4M14 .5v7l-4 4" fill={PALE} stroke={BLUE} />
  </S>
);
const VSunX = () => (
  <S w={15} h={14}>
    <circle cx="6" cy="6" r="3.500" fill="#f4ce5a" stroke="#c58b1a" />
    <path d="M6 0v2M0 6h2M1.500 1.500l1.500 1.500M10.500 1.500 9 3" stroke="#c58b1a" />
    <path d="M9 8l5 5M14 8l-5 5" stroke="#d9363e" strokeWidth="1.600" />
  </S>
);
const VShadowX = () => (
  <S w={15} h={14}>
    <circle cx="6" cy="5" r="3.500" stroke={BLUE} />
    <path d="M1 11h7" stroke="#333" strokeWidth="1.500" />
    <path d="M9 8l5 5M14 8l-5 5" stroke="#d9363e" strokeWidth="1.600" />
  </S>
);
const VCrop = ({ x }: { x?: boolean }) => (
  <S w={15} h={14}>
    <path d="M1 6h9M4 2v9" stroke={x ? "#3d6fa8" : "#555"} strokeWidth="1.400" />
    <rect x="4" y="3" width="6" height="6" fill="#cfe3f3" stroke="#666" />
    {x ? (
      <path d="M9 8l5 5M14 8l-5 5" stroke="#d9363e" strokeWidth="1.600" />
    ) : (
      <circle cx="11" cy="9" r="2.500" stroke={BLUE} />
    )}
  </S>
);
const VHouse = () => (
  <S w={16} h={15}>
    <path d="M1 5l6-4 6 4v8H1z" fill="#f2f2f2" stroke="#555" />
    <rect x="9" y="8" width="6" height="6" fill="#fff" stroke="#555" />
  </S>
);
const VWave = () => (
  <S w={15} h={13}>
    <path d="M1 3c3 0 3 7 6 7s3-7 6-8" stroke="#555" />
    <circle cx="10" cy="5" r="2.500" stroke={BLUE} />
  </S>
);
const VBulb = () => (
  <S w={9} h={13}>
    <circle cx="4.500" cy="4.500" r="3.500" stroke={BLUE} fill="#e2f0fa" />
    <path d="M3 9h3M3 11h3" stroke="#666" />
  </S>
);
const VCalc = () => (
  <S w={16} h={13}>
    <rect x="1.500" y="1.500" width="11" height="10" stroke="#555" strokeDasharray="2 1" />
    <rect x="9" y="6" width="6" height="6" fill="#fff" stroke="#555" />
  </S>
);
const VHouse2 = () => (
  <S w={16} h={14}>
    <path d="M1 5l7-4 7 4v8H1z" fill="#eee" stroke="#777" />
    <path d="M5 5v8M9 5v8" stroke="#b0584a" />
    <circle cx="12" cy="10" r="2.500" stroke={BLUE} />
  </S>
);
const VBox = () => (
  <S w={15} h={14}>
    <path d="M1 5h9v8H1zM1 5l4-4h9v8l-4 4M10 5l4-4" fill="#e5e5e5" stroke="#666" />
  </S>
);
const VLock = () => (
  <S w={16} h={14}>
    <path d="M1 1h14M1 12h7M1 1v11M15 1v5" stroke="#777" strokeDasharray="2 1" />
    <rect x="10" y="7" width="5" height="5" fill="#555" />
  </S>
);
const Chev = ({ right }: { right?: boolean }) => (
  <S w={6} h={9}>
    <path d={right ? "M1 1l4 3.500L1 8" : "M5 1 1 4.500 5 8"} stroke="#333" strokeWidth="1.300" />
  </S>
);

// status bar
const StPeople = () => (
  <S w={15} h={16}>
    <circle cx="4" cy="4" r="2.500" fill="#bbb" />
    <circle cx="10" cy="4" r="2.500" fill="#999" />
    <path d="M1 15V9l3-2 2 2v6zM8 15V8l3-1 3 2v6z" fill="#aaa" />
  </S>
);
const StQ = () => (
  <S w={11} h={16}>
    <path d="M1 1h8l1 6-5 2v6H1z" fill="#c5c5c5" />
    <path d="M4 3h4" stroke="#eee" />
  </S>
);
const StList = () => (
  <S w={14} h={15}>
    <rect x="0.500" y="0.500" width="13" height="14" fill="#fff" stroke="#444" />
    <rect x="1" y="1" width="12" height="3" fill="#555" />
    <path d="M3 7h8M3 10h8M3 12.500h8" stroke="#555" />
  </S>
);
const StGray = () => (
  <S w={14} h={15}>
    <rect x="0" y="0" width="14" height="15" fill="#b9b9b9" />
    <path d="M3 11V5l4-2v8z" fill="#8f8f8f" />
  </S>
);
const StLink = () => (
  <S w={16} h={16}>
    <rect x="0.500" y="1.500" width="8" height="6" rx="3" fill="#e8c25a" stroke="#a08638" />
    <rect x="7.500" y="1.500" width="8" height="6" rx="3" fill="#e8c25a" stroke="#a08638" />
    <path d="M8 5v10l2-2 2 3 1-1-2-3h3z" fill="#fff" stroke="#444" strokeWidth="0.800" />
  </S>
);
const StArrow = ({ children }: { children: ReactNode }) => (
  <S w={19} h={16}>
    {children}
    <path d="M11 6v9l2-2 1.500 3 1-.5-1.500-3h3z" fill="#fff" stroke="#444" strokeWidth="0.800" />
  </S>
);

export default function App() {
  return (
    <div className="w-[1280px] h-[720px] bg-black overflow-hidden font-['Open_Sans',sans-serif]">
      <div className="h-[19px]" />

      {/* title bar */}
      <div className="h-[27px] pb-[5px] bg-[#cfcfcf] flex items-center text-[#4a4a4a]">
        <div className="w-[563px] flex items-center shrink-0">
          <span className="ml-[4px] w-[16px] text-[23px] font-bold leading-none text-[#2e74ad] font-['Liberation_Sans',sans-serif]">R</span>
          <span className="ml-[10px]"><QFolder /></span>
          <span className="ml-[8px]"><QSave /></span>
          <span className="ml-[8px]"><QSync /></span>
          <span className="ml-[6px]"><Dd /></span>
          <span className="ml-[6px]"><QUndo /></span>
          <span className="ml-[6px]"><Dd /></span>
          <span className="ml-[5px]"><QUndo off /></span>
          <span className="ml-[7px]"><Dd /></span>
          <span className="ml-[7px]"><QPrint /></span>
          <span className="ml-[7px] w-px h-[20px] bg-[#bdbdbd]" />
          <span className="ml-[5px]"><QMeasure /></span>
          <span className="ml-[7px]"><Dd /></span>
          <span className="ml-[7px]"><QDiag /></span>
          <span className="ml-[5px]"><QTag /></span>
          <span className="ml-[8px] w-[14px] text-[20px] font-bold leading-none text-[#333] font-['Liberation_Sans',sans-serif]">A</span>
          <span className="ml-[8px] w-px h-[20px] bg-[#bdbdbd]" />
          <span className="ml-[6px]"><QHome /></span>
          <span className="ml-[5px]"><Dd /></span>
          <span className="ml-[7px]"><QRing /></span>
          <span className="ml-[8px]"><QThin /></span>
          <span className="ml-[9px]"><QWin1 /></span>
          <span className="ml-[7px]"><QWin2 /></span>
          <span className="ml-[4px]"><Dd /></span>
          <span className="ml-[6px]"><QCustom /></span>
        </div>
        <span className="w-[212px] shrink-0 text-[10.800px] -mt-[2px]">Ceiling - 3D View: {"{3D}"}</span>
        <svg width="4" height="7" viewBox="0 0 4 7" className="block shrink-0"><path d="M0 0l4 3.500L0 7z" fill="#444" /></svg>
        <div className="ml-[6px] w-[168px] h-[21px] bg-white border border-[#222] flex items-center pl-[2px] text-[9.800px] italic text-[#777] shrink-0">
          Type a keyword or phrase
        </div>
        <span className="ml-[4px]">
          <S w={16} h={15}>
            <path d="M2 1h4v5h4V1h4l1 13H9V8H7v6H1z" fill="#fff" stroke="#333" />
            <rect x="2" y="9" width="4" height="4" fill="#777" />
            <rect x="10" y="9" width="4" height="4" fill="#777" />
          </S>
        </span>
        <span className="ml-[7px]">
          <S w={16} h={16}>
            <path d="M2 2c5 0 10 4 11 9" stroke="#444" strokeWidth="1.300" />
            <path d="M2 2 12 12M7 8l-4 7h9z" stroke="#444" />
          </S>
        </span>
        <span className="ml-[6px]">
          <S w={15} h={15}>
            <path d="M7.500 1l2 4.500 5 .5-3.800 3.200 1.200 5-4.400-2.700L3 14.200l1.300-5L.5 6l5-.5z" fill="#fff" stroke="#444" />
          </S>
        </span>
        <span className="ml-[8px]">
          <S w={14} h={16}>
            <circle cx="7" cy="5" r="4.500" fill="#3a78c2" />
            <path d="M1 15v-2c0-2 3-3 6-3s6 1 6 3v2z" fill="#3a78c2" />
          </S>
        </span>
        <span className="ml-[6px] w-[73px] text-[10.300px] whitespace-nowrap shrink-0">firas007noori...</span>
        <span className="ml-[6px]"><Dd /></span>
        <span className="ml-[10px]">
          <S w={16} h={15}>
            <path d="M0 1h3l3 9h8l1-6H4" stroke="#4b7f9f" strokeWidth="1.200" />
            <circle cx="6" cy="13" r="1.500" fill="#4b7f9f" />
            <circle cx="13" cy="13" r="1.500" fill="#4b7f9f" />
          </S>
        </span>
        <span className="ml-[9px] w-px h-[20px] bg-[#bdbdbd]" />
        <span className="ml-[6px] w-[16px] h-[16px] rounded-full border-[1.500px] border-[#3a78c2] bg-white text-[#2a5f9f] text-[11px] font-bold flex items-center justify-center leading-none shrink-0">?</span>
        <span className="ml-[6px]"><Dd /></span>
        <span className="ml-[20px]">
          <S w={10} h={11}><path d="M1 9.500h7" stroke="#222" strokeWidth="2" /></S>
        </span>
        <span className="ml-[13px]">
          <S w={11} h={11}>
            <path d="M3.500 3V1h7v6H8" stroke="#222" />
            <rect x="0.500" y="3.500" width="7" height="7" stroke="#222" />
            <path d="M1 4.500h6" stroke="#222" />
          </S>
        </span>
        <span className="ml-[13px]">
          <S w={12} h={12}><path d="M1 1l10 10M11 1 1 11" stroke="#222" strokeWidth="1.800" /></S>
        </span>
      </div>

      {/* ribbon tabs */}
      <div className="h-[19px] bg-[#cfcfcf] flex items-center text-[10.800px] text-[#4a4a4a] whitespace-nowrap">
        <div className="w-[42px] h-full bg-[#2b7ab3] text-white flex items-center justify-center">File</div>
        <span className="ml-[11px] w-[80px]">Architecture</span>
        <span className="w-[63px]">Structure</span>
        <span className="w-[43px]">Steel</span>
        <span className="w-[58px]">Systems</span>
        <span className="w-[47px]">Insert</span>
        <span className="w-[64px]">Annotate</span>
        <span className="w-[58px]">Analyze</span>
        <span className="w-[92px]">Massing &amp; Site</span>
        <span className="w-[76px]">Collaborate</span>
        <span className="w-[42px]">View</span>
        <span className="w-[60px]">Manage</span>
        <span className="w-[58px]">Add-Ins</span>
        <span className="w-[59px]">Enscape™</span>
        <div className="w-[100px] h-full bg-[#e7efd8] flex items-center justify-center">Modify | Ceilings</div>
        <span className="ml-[21px]">
          <S w={14} h={9}>
            <rect x="0.500" y="0.500" width="13" height="8" rx="2" fill="#eee" stroke="#444" />
            <path d="M4 6l3-3 3 3z" fill="#333" />
          </S>
        </span>
        <span className="ml-[5px]"><Dd /></span>
      </div>

      <Ribbon />

      {/* context bar */}
      <div className="h-[27px] pt-[1px] bg-[#e7efd8] border-t border-[#d5dcc7] border-b flex items-center pl-[8px] text-[10.800px] text-[#4a4a4a]">
        Modify | Ceilings
      </div>

      {/* main */}
      <div className="h-[498px] bg-[#cfcfcf] flex">
        <ProjectBrowser />
        <div className="w-[3px] shrink-0" />
        <Schedule />
        <div className="w-[3px] shrink-0" />
        <div className="flex-1 flex flex-col min-w-0">
          <div className="h-[20px] pt-[1px] flex items-stretch justify-between bg-[#c9c9c9] pr-[4px] text-[10.800px] text-[#4a4a4a]">
            <div className="w-[118px] bg-white flex items-center pl-[4px] pr-[4px]">
              <S w={14} h={14}>
                <path d="M7 1 1 4l1 7 5 2 5-2 1-7z" fill="#e4e4e4" stroke="#444" />
                <path d="M1 4l6 3 6-3M7 7v6" stroke="#444" />
              </S>
              <span className="ml-[8px] flex-1">{"{3D}"}</span>
              <svg width="10" height="10" viewBox="0 0 10 10" className="block">
                <path d="M1 1l8 8M9 1 1 9" stroke="#222" strokeWidth="1.600" />
              </svg>
            </div>
            <div className="flex items-center">
              <Kebab />
            </div>
          </div>
          <div className="relative flex h-[460px]">
            <Model />
            <NavBar />
            <div className="w-[15px] bg-[#f0f0f0] flex flex-col items-center justify-between py-[8px] relative">
              <S w={8} h={5}><path d="M1 4l3-3 3 3" stroke="#333" strokeWidth="1.300" /></S>
              <div className="absolute left-0 top-[223px] w-full h-[15px] bg-[#c8c8c8]" />
              <S w={8} h={5}><path d="M1 1l3 3 3-3" stroke="#333" strokeWidth="1.300" /></S>
            </div>
          </div>
          <div className="h-[17px] bg-[#f0f0f0] flex items-center text-[10.800px] text-[#4a4a4a]">
            <span className="w-[75px] pl-[23px] whitespace-nowrap">1 : 100</span>
            <div className="flex items-center">
              <span className="w-[19.500px]"><V1 /></span>
              <span className="w-[19.500px]"><V2 /></span>
              <span className="w-[19.500px]"><VSunX /></span>
              <span className="w-[19.500px]"><VShadowX /></span>
              <span className="w-[19.500px]"><VCrop /></span>
              <span className="w-[19.500px]"><VCrop x /></span>
              <span className="w-[19.500px]"><VCrop /></span>
              <span className="w-[19.500px]"><VHouse /></span>
              <span className="w-[19.500px]"><VWave /></span>
              <span className="w-[19.500px] pl-[3px]"><VBulb /></span>
              <span className="w-[19.500px]"><VCalc /></span>
              <span className="w-[19.500px]"><VHouse2 /></span>
              <span className="w-[19.500px]"><VBox /></span>
              <span className="w-[22px]"><VLock /></span>
              <span className="w-[16px]"><Chev /></span>
              <span className="w-[16px]"><Chev right /></span>
            </div>
          </div>
          <div className="h-px bg-[#e4e4e4]" />
        </div>
      </div>

      {/* status bar */}
      <div className="h-[22px] bg-[#d1d1d1] flex items-center text-[10.800px] text-[#333]">
        <span className="pl-[2px] w-[329px] whitespace-nowrap shrink-0">Click to select, TAB for alternates, CTRL adds, SHIFT unselects.</span>
        <StPeople />
        <div className="ml-[8px] w-[192px] h-[19px] bg-white flex items-center justify-end pr-[5px] shrink-0">
          <S w={8} h={5}><path d="M1 1l3 3 3-3" stroke="#bbb" /></S>
        </div>
        <span className="ml-[10px]"><StQ /></span>
        <span className="ml-[3px] w-[35px] text-[10.800px]">:0</span>
        <span><StList /></span>
        <span className="ml-[9px]"><StGray /></span>
        <div className="ml-[9px] w-[192px] h-[19px] bg-[#e3e3e3] flex items-center justify-between pl-[2px] pr-[4px] text-[#8a8a8a] shrink-0">
          <span>Main Model</span>
          <S w={8} h={5}><path d="M1 1l3 3 3-3" stroke="#aaa" /></S>
        </div>
        <span className="ml-[212px]"><StLink /></span>
        <span className="ml-[6px]">
          <StArrow>
            <path d="M1 11h10M1 11l7-7" stroke={BLUE} />
            <path d="M10 1l5 5M15 1l-5 5" stroke="#d9363e" strokeWidth="1.600" />
          </StArrow>
        </span>
        <span className="ml-[5px]">
          <StArrow>
            <path d="M1 2h9v4H1zM3 6v8M7 6v8" stroke="#cc7a3d" />
          </StArrow>
        </span>
        <span className="ml-[6px]">
          <StArrow>
            <path d="M3 2h6v12H1V5z" stroke={BLUE} />
            <path d="M10 1l5 5M15 1l-5 5" stroke="#d9363e" strokeWidth="1.600" />
          </StArrow>
        </span>
        <span className="ml-[5px]">
          <StArrow>
            <path d="M6 1v8M2 5h8M6 1 5 2.500h2zM2 5l1.500-1v2zM10 5 8.500 4v2z" stroke="#333" />
          </StArrow>
        </span>
        <span className="ml-[7px]">
          <S w={16} h={16}>
            <circle cx="8" cy="8" r="5" stroke="#b5b5b5" strokeWidth="2.500" strokeDasharray="3 1" />
          </S>
        </span>
        <span className="ml-[6px]">
          <S w={16} h={16}>
            <path d="M1 2h14l-5 6v7H6V8z" fill="#e5e5e5" stroke="#555" />
          </S>
        </span>
        <span className="text-[10.800px] text-[#666]">:1</span>
      </div>
    </div>
  );
}
